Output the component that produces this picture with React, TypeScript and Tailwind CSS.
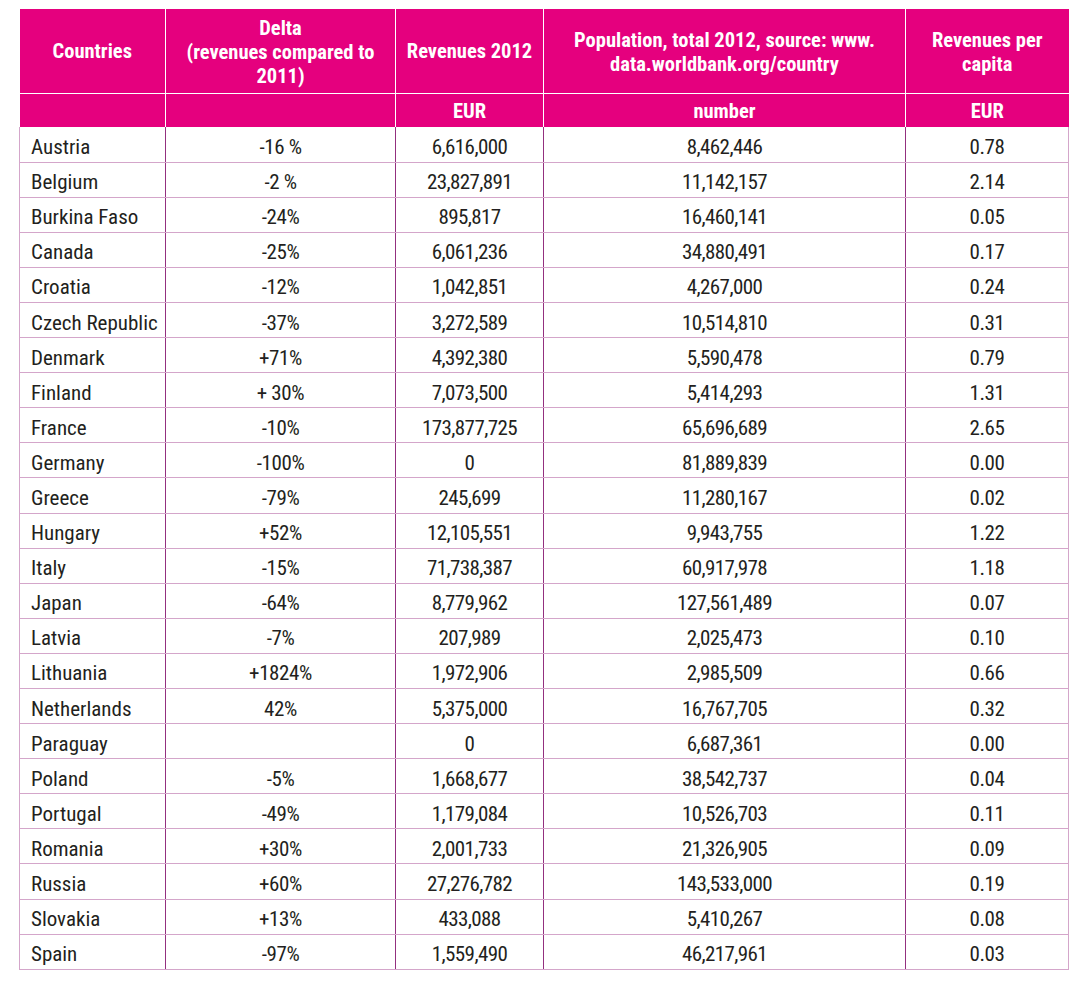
const rows: [string, string, string, string, string][] = [
  ['Austria', '-16 %', '6,616,000', '8,462,446', '0.78'],
  ['Belgium', '-2 %', '23,827,891', '11,142,157', '2.14'],
  ['Burkina Faso', '-24%', '895,817', '16,460,141', '0.05'],
  ['Canada', '-25%', '6,061,236', '34,880,491', '0.17'],
  ['Croatia', '-12%', '1,042,851', '4,267,000', '0.24'],
  ['Czech Republic', '-37%', '3,272,589', '10,514,810', '0.31'],
  ['Denmark', '+71%', '4,392,380', '5,590,478', '0.79'],
  ['Finland', '+ 30%', '7,073,500', '5,414,293', '1.31'],
  ['France', '-10%', '173,877,725', '65,696,689', '2.65'],
  ['Germany', '-100%', '0', '81,889,839', '0.00'],
  ['Greece', '-79%', '245,699', '11,280,167', '0.02'],
  ['Hungary', '+52%', '12,105,551', '9,943,755', '1.22'],
  ['Italy', '-15%', '71,738,387', '60,917,978', '1.18'],
  ['Japan', '-64%', '8,779,962', '127,561,489', '0.07'],
  ['Latvia', '-7%', '207,989', '2,025,473', '0.10'],
  ['Lithuania', '+1824%', '1,972,906', '2,985,509', '0.66'],
  ['Netherlands', '42%', '5,375,000', '16,767,705', '0.32'],
  ['Paraguay', '', '0', '6,687,361', '0.00'],
  ['Poland', '-5%', '1,668,677', '38,542,737', '0.04'],
  ['Portugal', '-49%', '1,179,084', '10,526,703', '0.11'],
  ['Romania', '+30%', '2,001,733', '21,326,905', '0.09'],
  ['Russia', '+60%', '27,276,782', '143,533,000', '0.19'],
  ['Slovakia', '+13%', '433,088', '5,410,267', '0.08'],
  ['Spain', '-97%', '1,559,490', '46,217,961', '0.03'],
];

const font = { fontFamily: '"Roboto Condensed", "Liberation Sans Narrow", Roboto, sans-serif' };

// body cell: fixed line box so the row stays 35px tall
const cell = 'p-0 pt-[5px] leading-[22px] border-b border-b-[#d4a6ca]';

export default function App() {
  return (
    <div className="bg-white w-[1089px] h-[992px] pt-[9px] pl-[19px]" style={font}>
      <table className="table-fixed border-collapse w-[1049px]">
        <colgroup>
          <col className="w-[146px]" />
          <col className="w-[230px]" />
          <col className="w-[148px]" />
          <col className="w-[362px]" />
          <col className="w-[163px]" />
        </colgroup>
        <thead>
          <tr className="h-[84px] bg-[#e5007e] text-white font-bold text-[20.5px] leading-[24px]">
            <th className="text-center border-r border-b border-white">Countries</th>
            <th className="text-center border-r border-b border-white pt-[2px]">
              Delta
              <br />
              (revenues compared to
              <br />
              2011)
            </th>
            <th className="text-center border-r border-b border-white">Revenues 2012</th>
            <th className="text-center border-r border-b border-white pt-[2px]">
              Population, total 2012, source: www.
              <br />
              data.worldbank.org/country
            </th>
            <th className="text-center border-b border-white pt-[2px]">
              Revenues per
              <br />
              capita
            </th>
          </tr>
          <tr className="h-[34px] bg-[#e5007e] text-white font-bold text-[20.5px] leading-[24px]">
            <th className="border-r border-white"></th>
            <th className="border-r border-white"></th>
            <th className="border-r border-white pt-[2px]">EUR</th>
            <th className="border-r border-white pt-[2px]">number</th>
            <th className="pt-[2px]">EUR</th>
          </tr>
        </thead>
        <tbody className="text-[21px] text-[#231f20]">
          {rows.map((r) => (
            <tr key={r[0]} className="h-[35.1px]">
              <td className={`${cell} pl-[11px] border-l border-l-[#d4a6ca] border-r border-r-[#93307f] whitespace-nowrap`}>
                {r[0]}
              </td>
              <td className={`${cell} text-center tracking-[-0.4px] border-r border-r-[#93307f]`}>{r[1]}</td>
              <td className={`${cell} text-center tracking-[-0.6px] border-r border-r-[#93307f]`}>{r[2]}</td>
              <td className={`${cell} text-center tracking-[-0.6px] border-r border-r-[#93307f]`}>{r[3]}</td>
              <td className={`${cell} text-center tracking-[-0.4px] border-r border-r-[#d4a6ca]`}>{r[4]}</td>
            </tr>
          ))}
        </tbody>
      </table>
    </div>
  );
}
